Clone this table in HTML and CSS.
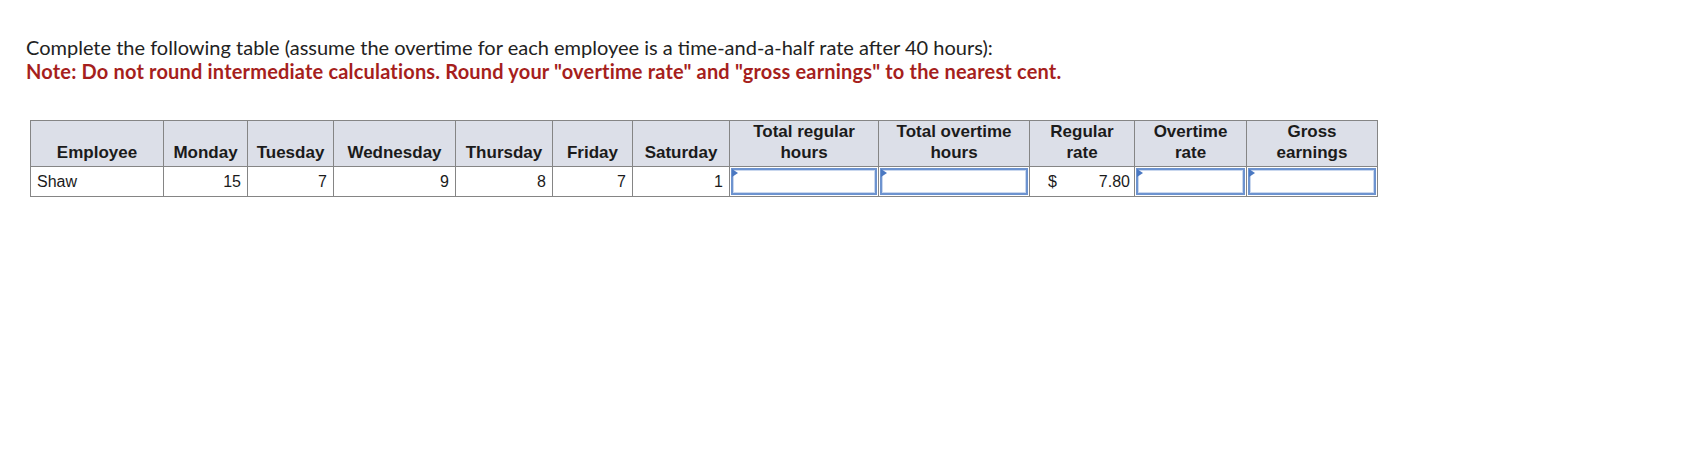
FILE: index.html
```html
<!DOCTYPE html>
<html>
<head>
<meta charset="utf-8">
<link rel="stylesheet" href="styles.css">
</head>
<body>
<div class="page">
  <p class="intro">Complete the following table (assume the overtime for each employee is a time-and-a-half rate after 40 hours):</p>
  <p class="note">Note: Do not round intermediate calculations. Round your "overtime rate" and "gross earnings" to the nearest cent.</p>
  <table class="grid">
    <colgroup>
      <col class="c-emp"><col class="c-mon"><col class="c-tue"><col class="c-wed"><col class="c-thu"><col class="c-fri"><col class="c-sat"><col class="c-treg"><col class="c-tot"><col class="c-rr"><col class="c-or"><col class="c-ge">
    </colgroup>
    <thead>
      <tr>
        <th>Employee</th>
        <th>Monday</th>
        <th>Tuesday</th>
        <th>Wednesday</th>
        <th>Thursday</th>
        <th>Friday</th>
        <th>Saturday</th>
        <th>Total regular<br>hours</th>
        <th>Total overtime<br>hours</th>
        <th>Regular<br>rate</th>
        <th>Overtime<br>rate</th>
        <th>Gross<br>earnings</th>
      </tr>
    </thead>
    <tbody>
      <tr>
        <td class="name">Shaw</td>
        <td class="num">15</td>
        <td class="num">7</td>
        <td class="num">9</td>
        <td class="num">8</td>
        <td class="num">7</td>
        <td class="num">1</td>
        <td class="in"><div class="field"></div></td>
        <td class="in"><div class="field"></div></td>
        <td class="money"><div class="money-box"><span>$</span><span>7.80</span></div></td>
        <td class="in"><div class="field"></div></td>
        <td class="in"><div class="field"></div></td>
      </tr>
    </tbody>
  </table>
</div>
</body>
</html>
```

FILE: styles.css
```css
html, body {
  margin: 0;
  padding: 0;
  background: #ffffff;
}

.page {
  padding: 35px 0 0 26px;
}

.intro, .note {
  margin: 0;
  font-family: "Lato", "Open Sans", sans-serif;
  font-size: 20px;
  line-height: 24px;
}

.intro {
  color: #222222;
}

.note {
  color: #a61f1d;
  font-weight: 700;
  letter-spacing: 0.18px;
}

.grid {
  margin: 37px 0 0 4px;
  border-collapse: collapse;
  table-layout: fixed;
  width: 1347px;
  font-family: "Liberation Sans", Arial, sans-serif;
  color: #1b1b1b;
  border: 1px solid #7b7b7b;
}

.c-emp { width: 133px; }
.c-mon { width: 84px; }
.c-tue { width: 86px; }
.c-wed { width: 122px; }
.c-thu { width: 97px; }
.c-fri { width: 80px; }
.c-sat { width: 97px; }
.c-treg { width: 149px; }
.c-tot { width: 151px; }
.c-rr { width: 105px; }
.c-or { width: 112px; }
.c-ge { width: 131px; }

.grid th {
  background: #dcdfe8;
  border: 1px solid #858585;
  font-size: 17px;
  font-weight: 700;
  line-height: 21px;
  height: 46px;
  padding: 0 4px 3px;
  vertical-align: bottom;
  text-align: center;
  box-sizing: border-box;
}

.grid td {
  border: 1px solid #858585;
  font-size: 16px;
  line-height: 20px;
  height: 30px;
  padding: 0 6px;
  box-sizing: border-box;
  vertical-align: middle;
}

.grid td.name {
  text-align: left;
}

.grid td.num {
  text-align: right;
}

.grid td.in {
  padding: 1px;
}

.field {
  position: relative;
  height: 27px;
  box-sizing: border-box;
  border: 2px solid #6d93cf;
  box-shadow: inset 0 0 0 1px #c9d7ee;
  background: #ffffff;
}

.field::before {
  content: "";
  position: absolute;
  left: -1px;
  top: -1px;
  width: 0;
  height: 0;
  border-top: 4px solid transparent;
  border-bottom: 4px solid transparent;
  border-left: 6px solid #4a78c2;
}

.grid td.money {
  padding: 0 4px 0 18px;
}

.money-box {
  display: flex;
  justify-content: space-between;
}
```
